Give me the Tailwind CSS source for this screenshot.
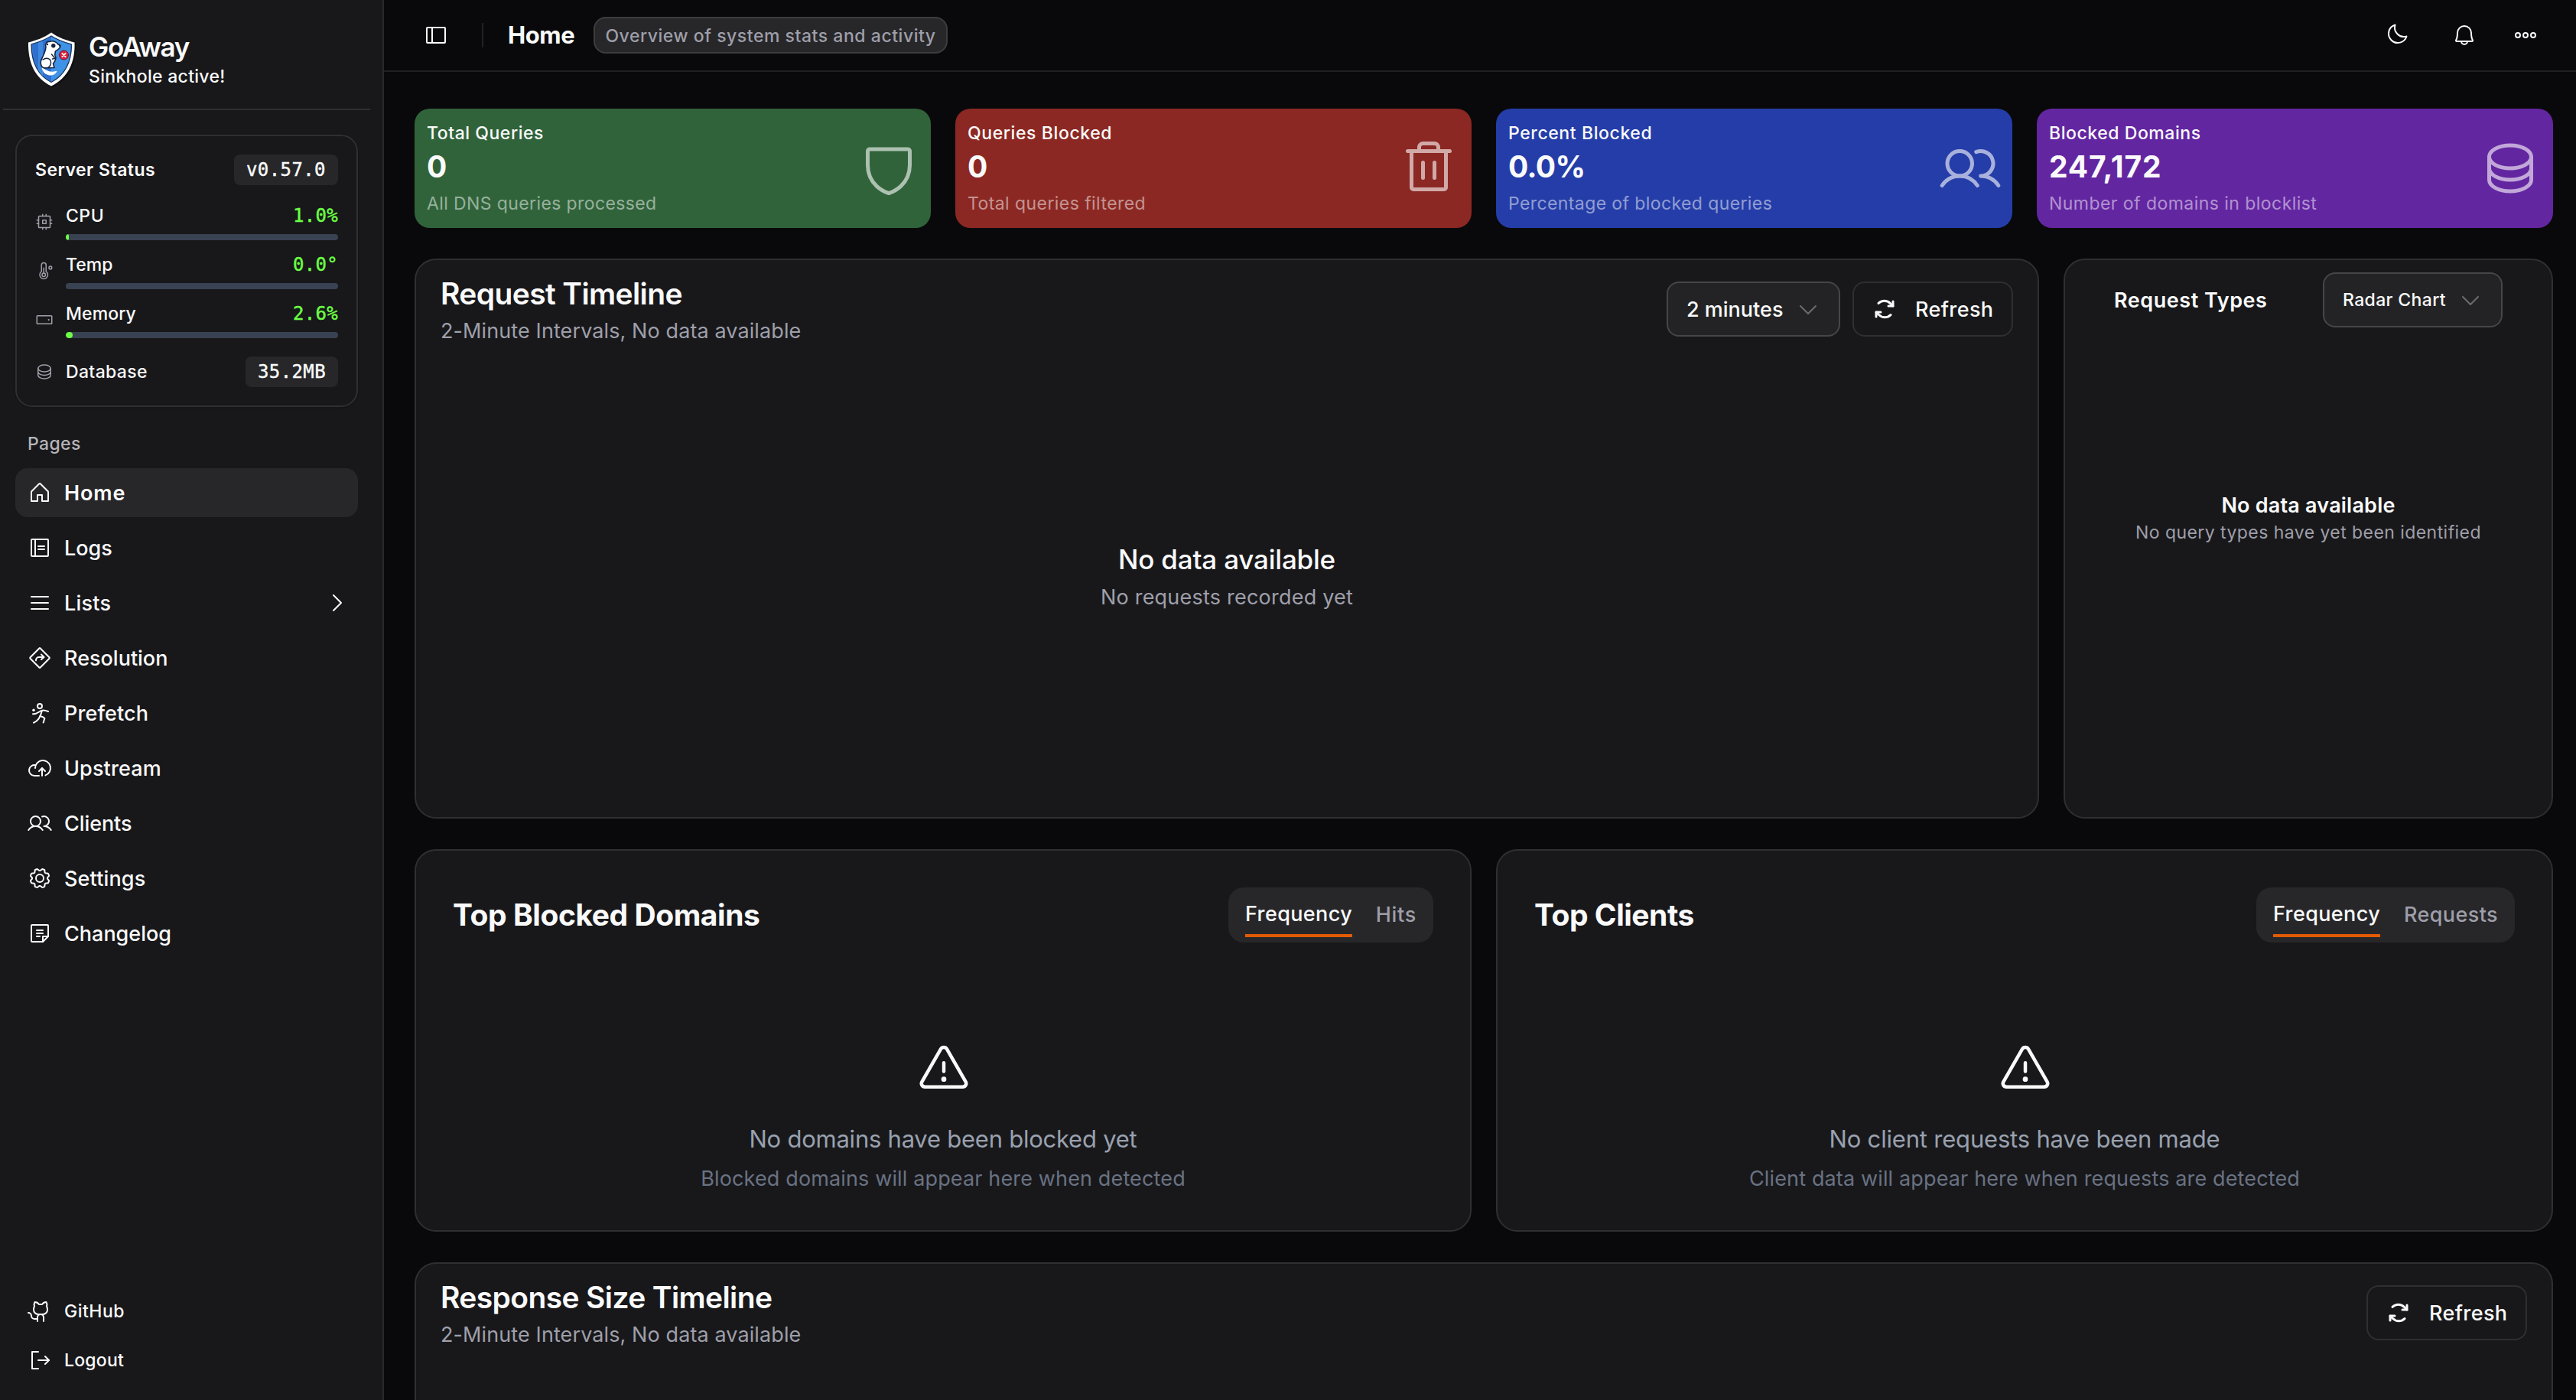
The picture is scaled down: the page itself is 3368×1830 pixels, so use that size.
<!DOCTYPE html>
<html lang="en">
<head>
<meta charset="utf-8">
<title>GoAway - Home</title>
<script src="https://cdn.jsdelivr.net/npm/@tailwindcss/browser@4"></script>
</head>
<body class="flex h-[1830px] w-[3368px] overflow-hidden bg-[#09090b] font-['Inter',sans-serif] text-[#fafafa]">

<!-- Icon sprite -->
<svg class="hidden" xmlns="http://www.w3.org/2000/svg">
  <symbol id="house" viewBox="0 0 256 256"><path d="M104,216V152h48v64h64V120a8,8,0,0,0-2.34-5.66l-80-80a8,8,0,0,0-11.32,0l-80,80A8,8,0,0,0,40,120v96Z"/></symbol>
  <symbol id="notebook" viewBox="0 0 256 256"><rect x="40" y="40" width="176" height="176" rx="8"/><path d="M80,40V216M112,112h64M112,144h64"/></symbol>
  <symbol id="list" viewBox="0 0 256 256"><path d="M40,64H216M40,128H216M40,192H216"/></symbol>
  <symbol id="sign" viewBox="0 0 256 256"><rect x="53.37" y="53.37" width="149.25" height="149.25" rx="8.22" transform="rotate(45 128 128)"/><polyline points="144 144 172 120 144 92"/><path d="M88,154v-4a30,30,0,0,1,30-30h52"/></symbol>
  <symbol id="throw" viewBox="0 0 256 256"><circle cx="128" cy="56" r="24"/><circle cx="64" cy="98" r="14" fill="currentColor" stroke="none"/><path d="M56,138c50,6,66-36,104-38,22-1,38,4,56,12"/><path d="M150,106c-14,64-34,104-86,124"/><path d="M131,160c18,4,36,12,48,24l-14,44"/></symbol>
  <symbol id="cloud" viewBox="0 0 256 256"><polyline points="120 160 152 128 184 160"/><path d="M152,208V128M80,128a80,80,0,1,1,108,75M120,208H72A56,56,0,1,1,85.92,97.74"/></symbol>
  <symbol id="users" viewBox="0 0 256 256"><circle cx="84" cy="108" r="52"/><path d="M10.23,200a88,88,0,0,1,147.54,0M172,160a87.93,87.93,0,0,1,73.77,40M152.69,59.7A52,52,0,1,1,172,160"/></symbol>
  <symbol id="gear" viewBox="0 0 256 256"><circle cx="128" cy="128" r="40"/><path d="M41.43,178.09A99.14,99.14,0,0,1,31.36,153.8l16.78-21a81.59,81.59,0,0,1,0-9.64l-16.77-21a99.43,99.43,0,0,1,10.05-24.3l26.71-3a81,81,0,0,1,6.81-6.81l3-26.7A99.14,99.14,0,0,1,102.2,31.36l21,16.78a81.59,81.59,0,0,1,9.64,0l21-16.77a99.43,99.43,0,0,1,24.3,10.05l3,26.71a81,81,0,0,1,6.81,6.81l26.7,3a99.14,99.14,0,0,1,10.07,24.29l-16.78,21a81.59,81.59,0,0,1,0,9.64l16.77,21a99.43,99.43,0,0,1-10,24.3l-26.71,3a81,81,0,0,1-6.81,6.81l-3,26.7a99.14,99.14,0,0,1-24.29,10.07l-21-16.78a81.59,81.59,0,0,1-9.64,0l-21,16.77a99.43,99.43,0,0,1-24.3-10l-3-26.71a81,81,0,0,1-6.81-6.81Z"/></symbol>
  <symbol id="note" viewBox="0 0 256 256"><path d="M96,96h64M96,128h64M96,160h32M156.69,216H48a8,8,0,0,1-8-8V48a8,8,0,0,1,8-8H208a8,8,0,0,1,8,8V156.69a8,8,0,0,1-2.34,5.65l-51.32,51.32A8,8,0,0,1,156.69,216Z"/><polyline points="215.28 160 160 160 160 215.27"/></symbol>
  <symbol id="github" viewBox="0 0 256 256"><path d="M119.83,56A52,52,0,0,0,76,32a51.92,51.92,0,0,0-3.49,44.7A49.28,49.28,0,0,0,64,104v8a48,48,0,0,0,48,48h48a48,48,0,0,0,48-48v-8a49.28,49.28,0,0,0-8.51-27.3A51.92,51.92,0,0,0,196,32a52,52,0,0,0-43.83,24Z"/><path d="M104,232V192a32,32,0,0,1,64,0v40M104,208H72a32,32,0,0,1-32-32A32,32,0,0,0,8,144"/></symbol>
  <symbol id="signout" viewBox="0 0 256 256"><polyline points="112 40 48 40 48 216 112 216"/><path d="M112,128H224"/><polyline points="184 88 224 128 184 168"/></symbol>
  <symbol id="cpu" viewBox="0 0 256 256"><rect x="104" y="104" width="48" height="48"/><rect x="48" y="48" width="160" height="160" rx="8"/><path d="M208,104h24M208,152h24M24,104h24M24,152h24M152,208v24M104,208v24M152,24v24M104,24v24"/></symbol>
  <symbol id="temp" viewBox="0 0 256 256"><circle cx="120" cy="184" r="24"/><path d="M120,160V88M88,48a32,32,0,0,1,64,0v90a56,56,0,1,1-64,0Z"/><circle cx="212" cy="84" r="20"/></symbol>
  <symbol id="drive" viewBox="0 0 256 256"><rect x="24" y="72" width="208" height="112" rx="8"/><circle cx="188" cy="128" r="12" fill="currentColor" stroke="none"/></symbol>
  <symbol id="database" viewBox="0 0 256 256"><ellipse cx="128" cy="80" rx="88" ry="48"/><path d="M40,80v48c0,26.51,39.4,48,88,48s88-21.49,88-48V80M40,128v48c0,26.51,39.4,48,88,48s88-21.49,88-48V128"/></symbol>
  <symbol id="sidebar" viewBox="0 0 256 256"><rect x="32" y="48" width="192" height="160" rx="8"/><path d="M88,48V208"/></symbol>
  <symbol id="moon" viewBox="0 0 256 256"><path d="M108.11,28.11A96.09,96.09,0,0,0,227.89,147.89,96,96,0,1,1,108.11,28.11Z"/></symbol>
  <symbol id="bell" viewBox="0 0 256 256"><path d="M96,192a32,32,0,0,0,64,0M56,104a72,72,0,0,1,144,0c0,35.82,8.3,64.6,14.9,76A8,8,0,0,1,208,192H48a8,8,0,0,1-6.88-12C47.71,168.6,56,139.81,56,104Z"/></symbol>
  <symbol id="dots" viewBox="0 0 256 256"><circle cx="128" cy="128" r="24"/><circle cx="48" cy="128" r="24"/><circle cx="208" cy="128" r="24"/></symbol>
  <symbol id="shield" viewBox="0 0 256 256"><path d="M40,114.79V56a8,8,0,0,1,8-8H208a8,8,0,0,1,8,8v58.77c0,84-71.31,111.8-85.5,116.5a7.54,7.54,0,0,1-5,0C111.31,226.57,40,198.74,40,114.79Z"/></symbol>
  <symbol id="trash" viewBox="0 0 256 256"><path d="M216,56H40M104,104v64M152,104v64M200,56V208a8,8,0,0,1-8,8H64a8,8,0,0,1-8-8V56M168,56V40a16,16,0,0,0-16-16H104A16,16,0,0,0,88,40V56"/></symbol>
  <symbol id="refresh" viewBox="0 0 256 256"><polyline points="168 96 216 96 216 48"/><path d="M216,96,187.72,67.72A88,88,0,0,0,64,67.13"/><polyline points="88 160 40 160 40 208"/><path d="M40,160l28.28,28.28A88,88,0,0,0,192,188.87"/></symbol>
  <symbol id="down" viewBox="0 0 256 256"><polyline points="208 96 128 176 48 96"/></symbol>
  <symbol id="right" viewBox="0 0 256 256"><polyline points="96 48 176 128 96 208"/></symbol>
  <symbol id="warning" viewBox="0 0 256 256"><path d="M142.41,40.22l87.46,151.87C236,202.79,228.08,216,215.46,216H40.54C27.92,216,20,202.79,26.13,192.09L113.59,40.22C119.89,29.26,136.11,29.26,142.41,40.22ZM128,144V104"/><circle cx="128" cy="180" r="12" fill="currentColor" stroke="none"/></symbol>
</svg>

<!-- Sidebar -->
<aside class="flex h-full w-[502px] shrink-0 flex-col border-r-2 border-[#29292c] bg-[#18181b]">
  <div class="ml-1 flex h-36 w-[480px] shrink-0 border-b-2 border-[#2f2f32] pl-[31px] pt-10">
    <svg class="h-[75px] w-[66px]" viewBox="0 0 66 75" fill="none">
      <path d="M34,4 C44,11 54,13 64,16 C66,42 56,64 34,74 C14,66 3,44 4,18Z" fill="#000" opacity=".35"/>
      <path d="M32,2.500 C42,10 52,12.500 62.500,15.500 C63.500,41 54,62 32,72.500 C10,62 1.500,41 2,15.500 C12,12.500 22,10 32,2.500Z" fill="#fff"/>
      <path d="M32,7 C41,13 50,15.500 58.500,18 C58.500,40 50,58 32,67.500 C14,58 6,40 6,18 C14,15.500 23,13 32,7Z" fill="#3f93e6" stroke="#16345f" stroke-width="1.300"/>
      <path d="M32,8 C24,13 15,16 7,18.500 C7,39 15,57 32,66.500Z" fill="#2f6fd0"/>
      <path d="M15,16 L21,14 L21,60 L15,52Z" fill="#4b9bea" opacity=".6"/>
      <path d="M20.500,49 C22,57 33,61.500 38.500,53.500 C33,55.500 25,54 20.500,49Z" fill="#fff" stroke="#fff" stroke-width="1.500" stroke-linejoin="round"/>
      <path d="M25,21.500 C23.500,18 26,13.500 29.500,14.500 C34,12.500 39,14.500 41,18 C44,18.500 44.500,20 43.500,21.500 C42.500,24 40,25.500 37.500,27 C37,29.500 36.500,31 37,33 C39,35 37.500,40 34.500,43 L36,48.500 L25,48.800 C18.500,49.500 16.500,42 20,36 C22.500,31 24.500,27 25,21.500Z" fill="#fff" stroke="#14233f" stroke-width="1.600" stroke-linejoin="round"/>
      <path d="M21,38 C25,35 31,36 31.500,41 C32,45 30,47 27.500,48.500 M32.500,31 L37,36.500 L33.500,37" stroke="#14233f" stroke-width="1.400" stroke-linecap="round"/>
      <circle cx="34.800" cy="19.800" r="2.700" fill="#14233f"/><circle cx="27" cy="18" r="1.200" fill="#14233f"/><circle cx="43" cy="19.500" r="1.200" fill="#14233f"/>
      <circle cx="48.500" cy="32" r="6" fill="#d9213b" stroke="#7b1530" stroke-width="1"/>
      <path d="M46.300,29.800 L50.700,34.200 M50.700,29.800 L46.300,34.200" stroke="#fff" stroke-width="1.800" stroke-linecap="round"/>
    </svg>
    <div class="ml-[15px] mt-0.5">
      <div class="text-[35px] leading-[38px] font-semibold tracking-[-1.31px]">GoAway</div>
      <div class="text-[23px] leading-[40px] font-medium tracking-[0.3px]">Sinkhole active!</div>
    </div>
  </div>

  <section class="ml-5 mt-8 flex h-[356px] w-[448px] shrink-0 flex-col rounded-[22px] border-2 border-[#2f2f32] p-6 text-[23px] leading-8 font-medium shadow-sm">
    <div class="flex h-10 items-center justify-between">
      <h2 class="font-semibold tracking-[0.48px]">Server Status</h2>
      <span class="flex h-10 w-[136px] items-center justify-center rounded-lg bg-[#27272a] font-['DejaVu_Sans_Mono',monospace] text-[24px] font-normal tracking-[0.4px] [-webkit-text-stroke:0.4px]">v0.57.0</span>
    </div>
    <div class="mt-6 flex h-12 items-center">
      <svg class="size-6 text-[#9f9fa9]" fill="none" stroke="currentColor" stroke-width="16" stroke-linecap="round" stroke-linejoin="round"><use href="#cpu"/></svg>
      <div class="ml-4 flex-1">
        <div class="flex h-8 justify-between"><span class="tracking-[0.5px]">CPU</span><span class="font-['DejaVu_Sans_Mono',monospace] text-[24px] font-normal tracking-[0.3px] text-[#6cff45] [-webkit-text-stroke:0.4px]">1.0%</span></div>
        <div class="mt-2 h-2 overflow-hidden rounded-full bg-[#394252]"><div class="h-2 rounded-full bg-[#6cff45]" style="width:1%"></div></div>
      </div>
    </div>
    <div class="mt-4 flex h-12 items-center">
      <svg class="size-6 text-[#9f9fa9]" fill="none" stroke="currentColor" stroke-width="16" stroke-linecap="round" stroke-linejoin="round"><use href="#temp"/></svg>
      <div class="ml-4 flex-1">
        <div class="flex h-8 justify-between"><span>Temp</span><span class="font-['DejaVu_Sans_Mono',monospace] text-[24px] font-normal tracking-[0.3px] text-[#6cff45] [-webkit-text-stroke:0.4px]">0.0°</span></div>
        <div class="mt-2 h-2 overflow-hidden rounded-full bg-[#394252]"></div>
      </div>
    </div>
    <div class="mt-4 flex h-12 items-center">
      <svg class="size-6 text-[#9f9fa9]" fill="none" stroke="currentColor" stroke-width="16" stroke-linecap="round" stroke-linejoin="round"><use href="#drive"/></svg>
      <div class="ml-4 flex-1">
        <div class="flex h-8 justify-between"><span class="tracking-[0.09px]">Memory</span><span class="font-['DejaVu_Sans_Mono',monospace] text-[24px] font-normal tracking-[0.3px] text-[#6cff45] [-webkit-text-stroke:0.4px]">2.6%</span></div>
        <div class="mt-2 h-2 overflow-hidden rounded-full bg-[#394252]"><div class="h-2 rounded-full bg-[#6cff45]" style="width:2.6%"></div></div>
      </div>
    </div>
    <div class="mt-6 flex h-10 items-center">
      <svg class="size-6 text-[#9f9fa9]" fill="none" stroke="currentColor" stroke-width="16" stroke-linecap="round" stroke-linejoin="round"><use href="#database"/></svg>
      <span class="ml-4 tracking-[0.35px]">Database</span>
      <span class="ml-auto flex h-10 w-[121px] items-center justify-center rounded-lg bg-[#27272a] font-['DejaVu_Sans_Mono',monospace] text-[24px] font-normal tracking-[0.4px] [-webkit-text-stroke:0.4px]">35.2MB</span>
    </div>
  </section>

  <div class="ml-9 mt-8 h-8 text-[23px] leading-8 font-medium tracking-[0.38px] text-[#b5b5b7]">Pages</div>

  <nav class="ml-5 mt-4 flex w-[448px] flex-col gap-2 text-[27px] font-medium">
    <a class="flex h-16 items-center gap-4 rounded-2xl bg-[#27272a] pl-4 font-semibold tracking-[0.87px]"><svg class="size-8" fill="none" stroke="currentColor" stroke-width="16" stroke-linecap="round" stroke-linejoin="round"><use href="#house"/></svg><span class="pt-0.5">Home</span></a>
    <a class="flex h-16 items-center gap-4 pl-4"><svg class="size-8" fill="none" stroke="currentColor" stroke-width="16" stroke-linecap="round" stroke-linejoin="round"><use href="#notebook"/></svg><span class="pt-0.5">Logs</span></a>
    <a class="flex h-16 items-center gap-4 pl-4 pr-3 tracking-[0.23px]"><svg class="size-8" fill="none" stroke="currentColor" stroke-width="16" stroke-linecap="round" stroke-linejoin="round"><use href="#list"/></svg><span class="pt-0.5">Lists</span><svg class="ml-auto size-8" fill="none" stroke="currentColor" stroke-width="16" stroke-linecap="round" stroke-linejoin="round"><use href="#right"/></svg></a>
    <a class="flex h-16 items-center gap-4 pl-4"><svg class="size-8" fill="none" stroke="currentColor" stroke-width="16" stroke-linecap="round" stroke-linejoin="round"><use href="#sign"/></svg><span class="pt-0.5">Resolution</span></a>
    <a class="flex h-16 items-center gap-4 pl-4 tracking-[0.1px]"><svg class="size-8" fill="none" stroke="currentColor" stroke-width="16" stroke-linecap="round" stroke-linejoin="round"><use href="#throw"/></svg><span class="pt-0.5">Prefetch</span></a>
    <a class="flex h-16 items-center gap-4 pl-4 tracking-[0.12px]"><svg class="size-8" fill="none" stroke="currentColor" stroke-width="16" stroke-linecap="round" stroke-linejoin="round"><use href="#cloud"/></svg><span class="pt-0.5">Upstream</span></a>
    <a class="flex h-16 items-center gap-4 pl-4 tracking-[-0.08px]"><svg class="size-8" fill="none" stroke="currentColor" stroke-width="16" stroke-linecap="round" stroke-linejoin="round"><use href="#users"/></svg><span class="pt-0.5">Clients</span></a>
    <a class="flex h-16 items-center gap-4 pl-4 tracking-[0.15px]"><svg class="size-8" fill="none" stroke="currentColor" stroke-width="16" stroke-linecap="round" stroke-linejoin="round"><use href="#gear"/></svg><span class="pt-0.5">Settings</span></a>
    <a class="flex h-16 items-center gap-4 pl-4"><svg class="size-8" fill="none" stroke="currentColor" stroke-width="16" stroke-linecap="round" stroke-linejoin="round"><use href="#note"/></svg><span class="pt-0.5">Changelog</span></a>
  </nav>

  <nav class="ml-5 mt-auto flex w-[448px] flex-col gap-2 pb-6 text-[23px] font-medium">
    <a class="flex h-14 items-center gap-4 pl-4 tracking-[0.5px]"><svg class="size-8" fill="none" stroke="currentColor" stroke-width="16" stroke-linecap="round" stroke-linejoin="round"><use href="#github"/></svg>GitHub</a>
    <a class="flex h-14 items-center gap-4 pl-4 tracking-[0.22px]"><svg class="size-8" fill="none" stroke="currentColor" stroke-width="16" stroke-linecap="round" stroke-linejoin="round"><use href="#signout"/></svg>Logout</a>
  </nav>
</aside>

<main class="flex h-full min-w-0 flex-1 flex-col">
  <header class="flex h-[94px] shrink-0 items-center border-b-2 border-[#202022] pl-[52px] pr-[50px]">
    <svg class="size-8" fill="none" stroke="currentColor" stroke-width="16" stroke-linecap="round" stroke-linejoin="round"><use href="#sidebar"/></svg>
    <div class="ml-[44px] h-8 w-0.5 bg-[#222225]"></div>
    <h1 class="ml-8 w-28 text-[31px] font-bold tracking-[-0.42px]">Home</h1>
    <span class="flex h-12 w-[463px] items-center justify-center rounded-2xl border-2 border-[#3d3d40] bg-[#27272a] text-[23px] leading-[36px] font-medium tracking-[0.54px] text-[#9f9fa9]"><span class="pt-0.5">Overview of system stats and activity</span></span>
    <div class="ml-auto flex items-center">
      <svg class="mb-[3px] size-8" fill="none" stroke="currentColor" stroke-width="16" stroke-linecap="round" stroke-linejoin="round"><use href="#moon"/></svg>
      <svg class="ml-14 size-8" fill="none" stroke="currentColor" stroke-width="16" stroke-linecap="round" stroke-linejoin="round"><use href="#bell"/></svg>
      <svg class="ml-12 size-8" fill="none" stroke="currentColor" stroke-width="16" stroke-linecap="round" stroke-linejoin="round"><use href="#dots"/></svg>
    </div>
  </header>

  <div class="flex min-h-0 flex-1 flex-col gap-10 pl-10 pr-[30px] pt-12">
    <!-- Summary cards -->
    <div class="grid h-[156px] shrink-0 grid-cols-4 gap-8">
      <div class="flex items-center justify-between rounded-[20px] bg-[#30633a] pl-4 pr-[15px]">
        <div><div class="text-[23px] leading-8 font-medium tracking-[0.54px]">Total Queries</div><div class="text-[39px] leading-[56px] font-bold">0</div><div class="mt-1 text-[23px] leading-8 tracking-[0.39px] text-white/50">All DNS queries processed</div></div>
        <svg class="size-20 text-[#acc1b0]" fill="none" stroke="currentColor" stroke-width="16" stroke-linecap="round" stroke-linejoin="round"><use href="#shield"/></svg>
      </div>
      <div class="flex items-center justify-between rounded-[20px] bg-[#8b2823] px-4">
        <div><div class="text-[23px] leading-8 font-medium tracking-[0.6px]">Queries Blocked</div><div class="text-[39px] leading-[56px] font-bold">0</div><div class="mt-1 text-[23px] leading-8 tracking-[0.43px] text-white/50">Total queries filtered</div></div>
        <svg class="size-20 text-[#d1a9a7]" fill="none" stroke="currentColor" stroke-width="16" stroke-linecap="round" stroke-linejoin="round"><use href="#trash"/></svg>
      </div>
      <div class="flex items-center justify-between rounded-[20px] bg-[#253da8] pl-4 pr-[15px]">
        <div><div class="text-[23px] leading-8 font-medium tracking-[0.6px]">Percent Blocked</div><div class="text-[39px] leading-[56px] font-bold tracking-[-0.61px]">0.0%</div><div class="mt-1 text-[23px] leading-8 tracking-[0.4px] text-white/50">Percentage of blocked queries</div></div>
        <svg class="size-20 text-[#a8b1dc]" fill="none" stroke="currentColor" stroke-width="16" stroke-linecap="round" stroke-linejoin="round"><use href="#users"/></svg>
      </div>
      <div class="flex items-center justify-between rounded-[20px] bg-[#6326a1] px-4">
        <div><div class="text-[23px] leading-8 font-medium tracking-[0.56px]">Blocked Domains</div><div class="text-[39px] leading-[56px] font-bold tracking-[0.8px]">247,172</div><div class="mt-1 text-[23px] leading-8 tracking-[0.45px] text-white/50">Number of domains in blocklist</div></div>
        <svg class="size-20 text-[#c1a8d9]" fill="none" stroke="currentColor" stroke-width="16" stroke-linecap="round" stroke-linejoin="round"><use href="#database"/></svg>
      </div>
    </div>

    <!-- Timeline and request types -->
    <div class="flex h-[732px] shrink-0 gap-8">
      <section class="w-[2124px] rounded-[28px] border-2 border-[#2f2f32] bg-[#18181b] px-8 pt-4">
        <div class="flex justify-between">
          <div>
            <h2 class="text-[39px] leading-[56px] font-semibold tracking-[-0.62px]">Request Timeline</h2>
            <p class="text-[27px] leading-[42px] tracking-[0.1px] text-[#9f9fa9]">2-Minute Intervals, No data available</p>
          </div>
          <div class="mt-3 flex h-[72px] gap-4 text-[27px] font-medium">
            <button class="flex w-[227px] items-center justify-between rounded-2xl border-2 border-[#464649] bg-[#232325] px-6"><span class="pt-0.5">2 minutes</span><svg class="size-8 text-[#6b6b72]" fill="none" stroke="currentColor" stroke-width="16" stroke-linecap="round" stroke-linejoin="round"><use href="#down"/></svg></button>
            <button class="flex w-[210px] items-center rounded-2xl border-2 border-[#2f2f32] pl-6 tracking-[0.38px]"><svg class="mr-6 size-8" fill="none" stroke="currentColor" stroke-width="24" stroke-linecap="round" stroke-linejoin="round"><use href="#refresh"/></svg><span class="pt-0.5">Refresh</span></button>
          </div>
        </div>
        <div class="mt-[253px] text-center">
          <p class="text-[35px] leading-[48px] font-medium tracking-[-0.2px]">No data available</p>
          <p class="pt-0.5 text-[27px] leading-[48px] tracking-[0.22px] text-[#9f9fa9]">No requests recorded yet</p>
        </div>
      </section>
      <section class="flex-1 rounded-[28px] border-2 border-[#2f2f32] bg-[#18181b] pt-4">
        <div class="flex h-[72px] items-center justify-between px-16">
          <h2 class="pt-0.5 text-[27px] font-semibold tracking-[0.54px]">Request Types</h2>
          <button class="flex h-[72px] w-[235px] items-center justify-between rounded-2xl border-2 border-[#464649] bg-[#232325] px-6 text-[23px] font-medium tracking-[0.36px]">Radar Chart<svg class="size-8 text-[#6b6b72]" fill="none" stroke="currentColor" stroke-width="16" stroke-linecap="round" stroke-linejoin="round"><use href="#down"/></svg></button>
        </div>
        <div class="mt-[215px] text-center">
          <p class="text-[27px] leading-9 font-semibold tracking-[0.2px]">No data available</p>
          <p class="text-[23px] leading-[35px] tracking-[0.44px] text-[#9f9fa9]">No query types have yet been identified</p>
        </div>
      </section>
    </div>

    <!-- Rankings -->
    <div class="grid h-[500px] shrink-0 grid-cols-2 gap-8">
      <section class="rounded-[28px] border-2 border-[#2f2f32] bg-[#18181b] px-12 pt-12">
        <div class="flex h-[72px] items-center justify-between">
          <h2 class="text-[39px] font-bold tracking-[-0.44px]">Top Blocked Domains</h2>
          <div class="flex h-[72px] w-[268px] justify-between rounded-[20px] bg-[#27272a] px-[22px] pt-2 text-[27px] font-medium">
            <span class="h-[57px] border-b-4 border-[#e25a04] leading-[54px] tracking-[0.38px]">Frequency</span>
            <span class="leading-[56px] tracking-[0.7px] text-[#9f9fa9]">Hits</span>
          </div>
        </div>
        <div class="mt-32 flex flex-col items-center">
          <svg class="ml-0.5 size-[72px]" fill="none" stroke="currentColor" stroke-width="16" stroke-linecap="round" stroke-linejoin="round"><use href="#warning"/></svg>
          <p class="mt-8 text-[31px] leading-[49px] tracking-[-0.24px] text-[#99a1af]">No domains have been blocked yet</p>
          <p class="mt-2 text-[27px] leading-10 tracking-[0.14px] text-[#6a7282]">Blocked domains will appear here when detected</p>
        </div>
      </section>
      <section class="rounded-[28px] border-2 border-[#2f2f32] bg-[#18181b] px-12 pt-12">
        <div class="flex h-[72px] items-center justify-between">
          <h2 class="text-[39px] font-bold tracking-[-0.48px]">Top Clients</h2>
          <div class="flex h-[72px] w-[338px] justify-between rounded-[20px] bg-[#27272a] px-[22px] pt-2 text-[27px] font-medium">
            <span class="h-[57px] border-b-4 border-[#e25a04] leading-[54px] tracking-[0.38px]">Frequency</span>
            <span class="leading-[56px] tracking-[0.4px] text-[#9f9fa9]">Requests</span>
          </div>
        </div>
        <div class="mt-32 flex flex-col items-center">
          <svg class="ml-0.5 size-[72px]" fill="none" stroke="currentColor" stroke-width="16" stroke-linecap="round" stroke-linejoin="round"><use href="#warning"/></svg>
          <p class="mt-8 text-[31px] leading-[49px] tracking-[-0.19px] text-[#99a1af]">No client requests have been made</p>
          <p class="mt-2 text-[27px] leading-10 tracking-[0.14px] text-[#6a7282]">Client data will appear here when requests are detected</p>
        </div>
      </section>
    </div>

    <!-- Response size -->
    <section class="flex min-h-0 flex-1 items-start justify-between rounded-t-[28px] border-2 border-b-0 border-[#2f2f32] bg-[#18181b] px-8 pt-4">
      <div>
        <h2 class="text-[39px] leading-[56px] font-semibold tracking-[-0.62px]">Response Size Timeline</h2>
        <p class="text-[27px] leading-[42px] tracking-[0.1px] text-[#9f9fa9]">2-Minute Intervals, No data available</p>
      </div>
      <button class="mt-3 flex h-[72px] w-[210px] items-center rounded-2xl border-2 border-[#2f2f32] pl-6 text-[27px] font-medium tracking-[0.38px]"><svg class="mr-6 size-8" fill="none" stroke="currentColor" stroke-width="24" stroke-linecap="round" stroke-linejoin="round"><use href="#refresh"/></svg><span class="pt-0.5">Refresh</span></button>
    </section>
  </div>
</main>
</body>
</html>
